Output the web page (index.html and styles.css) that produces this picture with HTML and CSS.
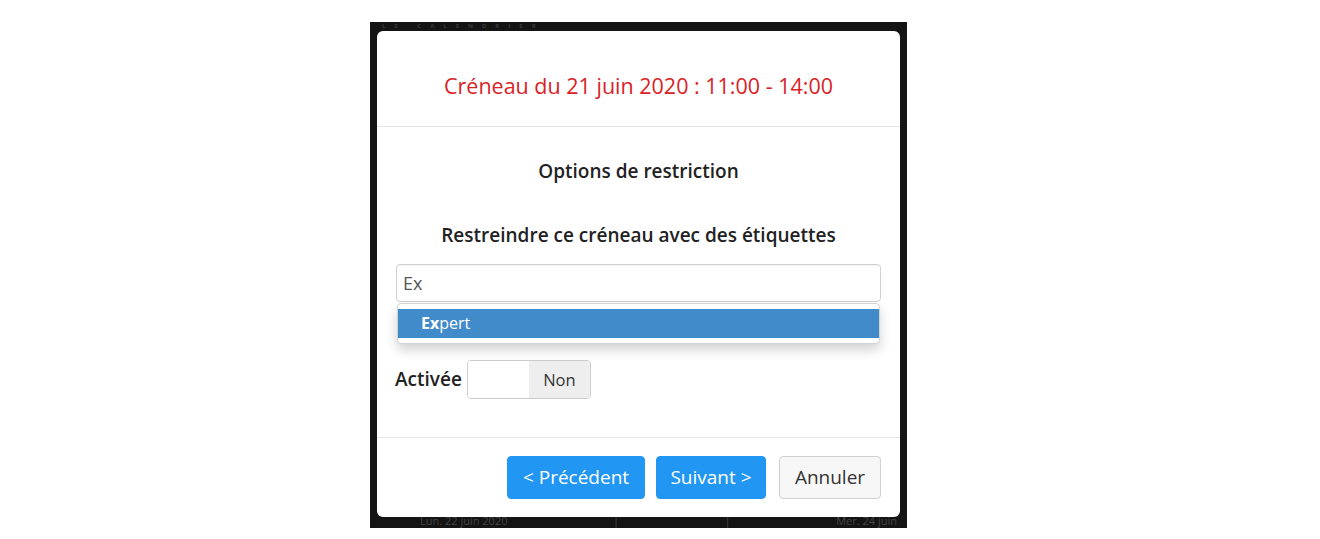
FILE: index.html
```html
<!DOCTYPE html>
<html lang="fr">
<head>
<meta charset="utf-8">
<title>Créneau</title>
<link rel="stylesheet" href="styles.css">
</head>
<body>
<div class="screen">
  <div class="ghost ghost-top">LE CALENDRIER</div>
  <div class="ghost ghost-bottom"><span>Lun. 22 juin 2020</span><span>|</span><span>|</span><span>Mer. 24 juin</span></div>
  <div class="modal">
    <div class="modal-header">
      <h4 class="modal-title">Créneau du 21 juin 2020 : 11:00 - 14:00</h4>
    </div>
    <div class="modal-body">
      <h5 class="section-title">Options de restriction</h5>
      <h5 class="field-title">Restreindre ce créneau avec des étiquettes</h5>
      <div class="typeahead">
        <div class="input">Ex</div>
        <ul class="menu">
          <li class="menu-item active"><strong>Ex</strong>pert</li>
        </ul>
      </div>
      <div class="switch-row">
        <span class="switch-label">Activée</span>
        <div class="switch">
          <span class="switch-on"></span>
          <span class="switch-off">Non</span>
        </div>
      </div>
    </div>
    <div class="modal-footer">
      <button class="btn btn-primary btn-prev">&lt; Précédent</button>
      <button class="btn btn-primary btn-next">Suivant &gt;</button>
      <button class="btn btn-default">Annuler</button>
    </div>
  </div>
</div>
</body>
</html>
```

FILE: styles.css
```css
html, body {
  margin: 0;
  padding: 0;
  background: #ffffff;
}

body {
  font-family: "Open Sans", "Noto Sans", "DejaVu Sans", sans-serif;
  padding: 22px 0 0 370px;
  height: 539px;
  box-sizing: border-box;
}

.screen {
  position: relative;
  width: 537px;
  height: 506px;
  background: #141414;
  padding: 9px 7px 0 7px;
  box-sizing: border-box;
  overflow: hidden;
}

.ghost {
  position: absolute;
  color: #3a3a3a;
  font-weight: 700;
}

.ghost-top {
  top: 1px;
  left: 12px;
  font-size: 6px;
  line-height: 7px;
  letter-spacing: 9px;
}

.ghost-bottom {
  bottom: 0;
  left: 50px;
  right: 10px;
  font-size: 11px;
  font-weight: 400;
  display: flex;
  justify-content: space-between;
  color: #444;
}

.modal {
  position: relative;
  width: 523px;
  height: 486px;
  background: #ffffff;
  border-radius: 6px;
  display: flex;
  flex-direction: column;
}

.modal-header {
  border-bottom: 1px solid #e5e5e5;
  display: flex;
  align-items: center;
  justify-content: center;
  padding-top: 15px;
  height: 80px;
}

.modal-title {
  margin: 0;
  font-size: 21.5px;
  font-weight: 500;
  color: #d92228;
  line-height: 28px;
}

.modal-body {
  padding: 30px 19px 38px 19px;
  border-bottom: 1px solid #e5e5e5;
}

.section-title,
.field-title {
  margin: 0;
  text-align: center;
  font-size: 19px;
  font-weight: 600;
  color: #222;
  line-height: 28px;
}

.field-title {
  margin-top: 36px;
}

.typeahead {
  position: relative;
  margin-top: 15px;
}

.input {
  height: 38px;
  box-sizing: border-box;
  border: 1px solid #cfcfcf;
  border-radius: 4px;
  padding: 0 6px;
  font-size: 18px;
  line-height: 36px;
  color: #555;
  box-shadow: inset 0 1px 1px rgba(0, 0, 0, 0.05);
}

.menu {
  position: absolute;
  top: 39px;
  left: 1px;
  right: 1px;
  margin: 0;
  padding: 5px 0;
  list-style: none;
  background: #fff;
  border: 1px solid #d4d4d4;
  border-radius: 4px;
  box-shadow: 0 6px 12px rgba(0, 0, 0, 0.18);
}

.menu-item {
  height: 29px;
  line-height: 29px;
  padding: 0 23px;
  font-size: 16px;
  color: #333;
}

.menu-item.active {
  background: #428bca;
  color: #fff;
}

.menu-item strong {
  font-weight: 700;
}

.switch-row {
  display: flex;
  align-items: center;
  margin-top: 58px;
  margin-left: -1px;
}

.switch-label {
  font-size: 19px;
  font-weight: 600;
  color: #222;
  margin-right: 5px;
  position: relative;
  top: -1px;
}

.switch {
  display: flex;
  width: 124px;
  height: 39px;
  box-sizing: border-box;
  border: 1px solid #cccccc;
  border-radius: 4px;
  overflow: hidden;
}

.switch-on {
  width: 61px;
  background: #fff;
}

.switch-off {
  flex: 1;
  background: #eeeeee;
  color: #333;
  font-size: 16.5px;
  display: flex;
  align-items: center;
  justify-content: center;
}

.modal-footer {
  flex: 1;
  display: flex;
  justify-content: flex-end;
  align-items: flex-start;
  padding: 18px 19px 0 19px;
}

.btn {
  height: 43px;
  box-sizing: border-box;
  font-family: "Open Sans", "Noto Sans", sans-serif;
  font-size: 19px;
  border-radius: 4px;
  border: 1px solid transparent;
  padding: 0 10px 2px 10px;
  cursor: pointer;
}

.btn-primary {
  background: #2196f3;
  color: #fff;
  border-color: #2196f3;
}

.btn-prev {
  width: 138px;
}

.btn-next {
  width: 110px;
  margin-left: 11px;
}

.btn-default {
  width: 102px;
  margin-left: 13px;
  background: #f7f7f7;
  color: #333;
  border-color: #d0d0d0;
}
```
